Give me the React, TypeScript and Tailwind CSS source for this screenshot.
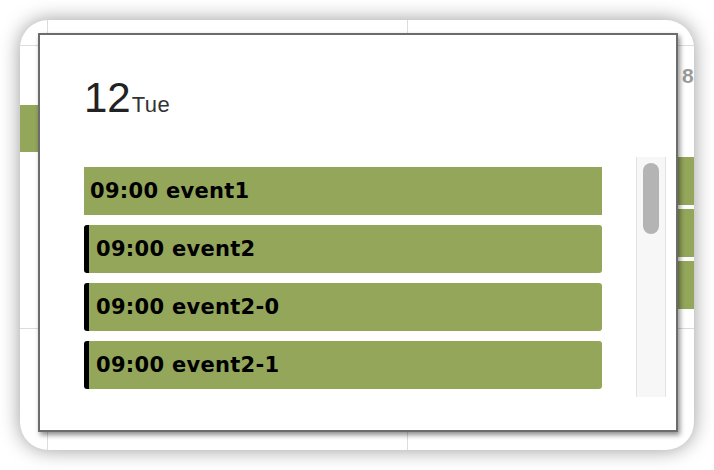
import React from 'react';

const events = [
  { label: '09:00 event1', marked: false },
  { label: '09:00 event2', marked: true },
  { label: '09:00 event2-0', marked: true },
  { label: '09:00 event2-1', marked: true },
];

const EventBar: React.FC<{ label: string; marked: boolean }> = ({ label, marked }) => (
  <div
    className={
      marked
        ? 'h-[48px] flex items-center bg-[#93a65a] rounded-[3px] border-l-[5px] border-black pl-[7px]'
        : 'h-[48px] flex items-center bg-[#93a65a] pl-[6px]'
    }
  >
    <span className="font-['DejaVu_Sans',sans-serif] font-bold text-[21px] tracking-[0.3px] text-black leading-none">
      {label}
    </span>
  </div>
);

export default function App() {
  return (
    <div className="w-[714px] h-[470px] bg-white p-[20px] font-['Liberation_Sans',Arial,sans-serif]">
      <div className="relative w-full h-full bg-white rounded-[28px] overflow-hidden shadow-[0_0_20px_rgba(0,0,0,0.4)]">
        {/* calendar behind the popup */}
        <div className="grid grid-cols-[28px_360px_1fr] grid-rows-[26px_283px_1fr] w-full h-full">
          <div className="border-r border-b border-[#dcdcdc]" />
          <div className="border-r border-b border-[#dcdcdc]" />
          <div className="border-b border-[#dcdcdc]" />

          <div className="border-r border-b border-[#dcdcdc]">
            <div className="mt-[59px] h-[47px] bg-[#93a65a]" />
          </div>
          <div className="border-r border-b border-[#dcdcdc]" />
          <div className="border-b border-[#dcdcdc] flex flex-col">
            <div className="mt-[18px] pl-[274px] h-[24px] leading-[24px] text-[21px] font-bold text-[#9a9a9a]">8</div>
            <div className="mt-[69px] ml-[200px] flex flex-col gap-[4px]">
              <div className="h-[48px] bg-[#93a65a]" />
              <div className="h-[48px] bg-[#93a65a]" />
              <div className="h-[48px] bg-[#93a65a]" />
            </div>
          </div>

          <div className="border-r border-[#dcdcdc]" />
          <div className="border-r border-[#dcdcdc]" />
          <div />
        </div>

        {/* day popup */}
        <div className="absolute left-[18px] top-[13px] w-[640px] h-[399px] bg-white border-2 border-[#6c6c6c] shadow-[2px_3px_5px_rgba(0,0,0,0.45)] flex flex-col pt-[42px] pl-[44px] pr-[10px]">
          <div className="flex items-baseline text-[#222]">
            <span className="text-[42px] leading-none">12</span>
            <span className="text-[22px] leading-[24px] tracking-[0.5px] ml-[1px] text-[#333]">Tue</span>
          </div>
          <div className="mt-[38px] h-[240px] flex">
            <div className="w-[518px] pt-[10px] flex flex-col gap-[10px] overflow-hidden">
              {events.map((e) => (
                <EventBar key={e.label} label={e.label} marked={e.marked} />
              ))}
            </div>
            <div className="ml-[34px] w-[30px] h-full bg-[#f7f7f7] border-x border-[#e3e3e3] flex justify-center pt-[6px]">
              <div className="w-[16px] h-[71px] rounded-full bg-[#b4b4b4]" />
            </div>
          </div>
        </div>
      </div>
    </div>
  );
}
